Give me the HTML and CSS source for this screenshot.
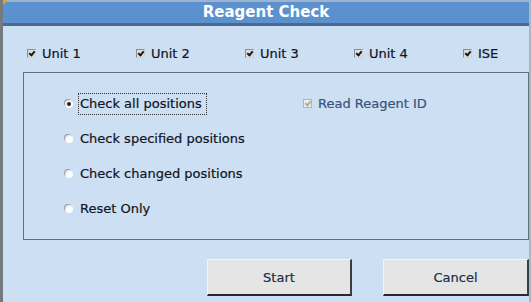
FILE: index.html
```html
<!DOCTYPE html>
<html lang="en">
<head>
  <meta charset="UTF-8">
  <meta name="viewport" content="width=device-width, initial-scale=1.0">
  <title>Reagent Check</title>
  <link rel="stylesheet" href="styles.css">
</head>
<body>
  <div class="window">
    <span class="corner"></span>
    <div class="title">Reagent Check</div>
    <div class="units">
      <label class="check"><span class="box on"></span>Unit 1</label>
      <label class="check"><span class="box on"></span>Unit 2</label>
      <label class="check"><span class="box on"></span>Unit 3</label>
      <label class="check"><span class="box on"></span>Unit 4</label>
      <label class="check"><span class="box on"></span>ISE</label>
    </div>
    <div class="group">
      <div class="options">
        <label class="radio"><span class="dot on"></span><span class="text focus">Check all positions</span></label>
        <label class="radio"><span class="dot"></span><span class="text">Check specified positions</span></label>
        <label class="radio"><span class="dot"></span><span class="text">Check changed positions</span></label>
        <label class="radio"><span class="dot"></span><span class="text">Reset Only</span></label>
      </div>
      <div class="extra">
        <label class="check disabled"><span class="box on"></span>Read Reagent ID</label>
      </div>
    </div>
    <div class="actions">
      <button class="btn start">Start</button>
      <button class="btn cancel">Cancel</button>
    </div>
  </div>
</body>
</html>
```

FILE: styles.css
```css
body {
  margin: 0;
  font-family: "DejaVu Sans", "Liberation Sans", sans-serif;
  font-size: 13px;
  color: #10141f;
  -webkit-text-stroke: 0.2px;
}
.window {
  position: relative;
  width: 531px;
  height: 302px;
  box-sizing: border-box;
  overflow: hidden;
  background-color: #cddff2;
  border-left: 3px solid #757a80;
  border-right: 2px solid #a9b6c4;
  display: flex;
  flex-direction: column;
}
.corner {
  position: absolute;
  left: 0;
  top: 0;
  width: 0;
  height: 0;
  border-top: 5px solid #d9a640;
  border-right: 5px solid transparent;
}
.title {
  height: 21px;
  line-height: 21px;
  background-color: #5b91cf;
  border-top: 2px solid #9cb4cf;
  border-bottom: 3px solid #4c6a8f;
  color: #fff;
  font-size: 15px;
  font-weight: bold;
  text-align: center;
  -webkit-text-stroke: 0;
}
.units {
  display: grid;
  grid-template-columns: repeat(4, 109px) auto;
  margin: 20px 0 0 24px;
}
.check {
  display: flex;
  align-items: center;
  height: 14px;
}
.box {
  position: relative;
  width: 7px;
  height: 7px;
  margin-right: 6px;
  background-color: #dcdcdc;
  border: 1px solid #8a8f96;
  border-right-color: #d0d4d8;
  border-bottom-color: #d0d4d8;
}
.box.on::after {
  content: "";
  position: absolute;
  left: 2px;
  top: 0;
  width: 2px;
  height: 4px;
  border-right: 2px solid #1a1a1a;
  border-bottom: 2px solid #1a1a1a;
  transform: rotate(40deg);
}
.group {
  display: grid;
  grid-template-columns: 238px 1fr;
  margin: 12px 0 0 20px;
  height: 168px;
  box-sizing: border-box;
  border: 1px solid #66707c;
  padding: 21px 0 0 41px;
}
.options {
  display: flex;
  flex-direction: column;
  gap: 16px;
}
.radio {
  display: flex;
  align-items: center;
  height: 19px;
}
.dot {
  position: relative;
  width: 8px;
  height: 8px;
  margin-right: 5px;
  border-radius: 50%;
  background: radial-gradient(circle at 65% 65%, #ffffff 40%, #c8ccd2 100%);
  box-shadow: -1px -1px 0 #9aa2ac;
}
.dot.on::after {
  content: "";
  position: absolute;
  left: 2px;
  top: 2px;
  width: 4px;
  height: 4px;
  border-radius: 50%;
  background-color: #222;
}
.text {
  padding: 2px 4px 3px 1px;
  border: 1px dotted transparent;
}
.text.focus {
  border-color: #333;
}
.extra {
  padding-top: 2px;
}
.disabled {
  color: #36537a;
}
.disabled .box {
  background-color: #ececec;
  border-color: #b0b4b8;
}
.disabled .box.on::after {
  border-color: #a8b090;
}
.actions {
  display: flex;
  justify-content: flex-end;
  gap: 31px;
  margin-top: 19px;
}
.btn {
  height: 37px;
  padding: 0;
  font-family: inherit;
  font-size: 13px;
  color: #1e2c48;
  background-color: #e5e5e5;
  border: none;
  border-top: 1px solid #f4f4f4;
  border-left: 1px solid #f4f4f4;
  border-right: 2px solid #3a3f46;
  border-bottom: 2px solid #262a30;
}
.start {
  width: 145px;
}
.cancel {
  width: 146px;
}
```
